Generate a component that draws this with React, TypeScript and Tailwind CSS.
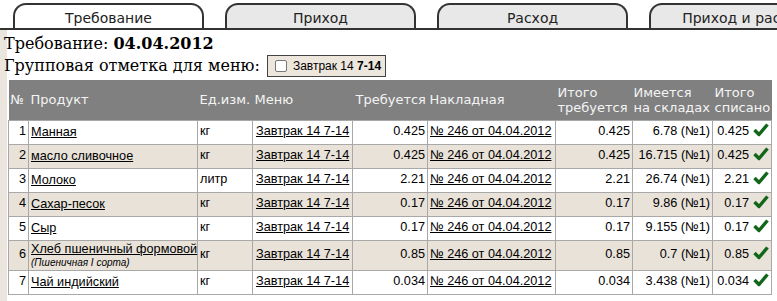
import React from "react";

interface Row {
  n: number;
  product: string;
  note?: string;
  unit: string;
  need: string;
  total: string;
  stock: string;
  done: string;
}

const ROWS: Row[] = [
  { n: 1, product: "Манная", unit: "кг", need: "0.425", total: "0.425", stock: "6.78 (№1)", done: "0.425" },
  { n: 2, product: "масло сливочное", unit: "кг", need: "0.425", total: "0.425", stock: "16.715 (№1)", done: "0.425" },
  { n: 3, product: "Молоко", unit: "литр", need: "2.21", total: "2.21", stock: "26.74 (№1)", done: "2.21" },
  { n: 4, product: "Сахар-песок", unit: "кг", need: "0.17", total: "0.17", stock: "9.86 (№1)", done: "0.17" },
  { n: 5, product: "Сыр", unit: "кг", need: "0.17", total: "0.17", stock: "9.155 (№1)", done: "0.17" },
  { n: 6, product: "Хлеб пшеничный формовой", note: "(Пшеничная I сорта)", unit: "кг", need: "0.85", total: "0.85", stock: "0.7 (№1)", done: "0.85" },
  { n: 7, product: "Чай индийский", unit: "кг", need: "0.034", total: "0.034", stock: "3.438 (№1)", done: "0.034" },
];

const TABS = ["Требование", "Приход", "Расход", "Приход и расход"];

function Check() {
  return (
    <svg width="16" height="14" viewBox="0 0 16 14" className="inline-block ml-[4px] -mt-[4px] align-middle">
      <path d="M1.5 7 L6 11.5 L14.5 1.5" fill="none" stroke="#12661a" strokeWidth="3.4" strokeLinejoin="round" />
    </svg>
  );
}

const td = "border border-[#a8a8a8] px-[2px] whitespace-nowrap";

export default function App() {
  return (
    <div className="w-[777px] h-[301px] overflow-hidden bg-white" style={{ fontFamily: '"Liberation Sans", Arial, sans-serif' }}>
      {/* Tabs */}
      <div className="flex gap-[21px] pl-[13px] pt-[3px] h-[30px] border-b-2 border-[#333] overflow-hidden">
        {TABS.map((t, i) => (
          <div
            key={t}
            className={`shrink-0 w-[191px] h-[28px] rounded-t-[13px] border-2 border-b-0 border-[#333] flex items-center justify-center text-[14px] text-[#222] whitespace-nowrap ${
              i === 0 ? "bg-white h-[29px] -mb-[2px]" : "bg-[#e8e8e8]"
            }`}
            style={{ fontFamily: '"DejaVu Sans", sans-serif' }}
          >
            {t}
          </div>
        ))}
      </div>

      <div className="bg-[linear-gradient(to_right,#ebe6dd_7px,#ffffff_7px)] h-[271px]">
        <div className="pl-[4px] pt-[3px] text-[16px] leading-[22px] text-black" style={{ fontFamily: '"DejaVu Serif", serif' }}>
          <div>
            Требование: <b>04.04.2012</b>
          </div>
          <div className="flex items-center">
            <span>Групповая отметка для меню:</span>
            <label className="ml-[7px] h-[22px] flex items-center gap-[6px] pl-[7px] pr-[4px] bg-[#ece6dc] border border-[#444] text-[12px]" style={{ fontFamily: '"Liberation Sans", Arial, sans-serif' }}>
              <span className="w-[12px] h-[12px] border border-[#777] bg-white rounded-[2px]" />
              <span>
                Завтрак 14 <b>7-14</b>
              </span>
            </label>
          </div>
        </div>

        <table className="ml-[8px] mt-[3px] w-[763px] table-fixed border-collapse text-[12.7px] text-black">
          <colgroup>
            <col className="w-[20px]" />
            <col className="w-[169px]" />
            <col className="w-[55px]" />
            <col className="w-[100px]" />
            <col className="w-[75px]" />
            <col className="w-[128px]" />
            <col className="w-[77px]" />
            <col className="w-[80px]" />
            <col className="w-[59px]" />
          </colgroup>
          <thead>
            <tr className="bg-[#808080] text-[#f4f4f4] h-[40px] text-left text-[13px]" style={{ fontFamily: '"DejaVu Sans", sans-serif' }}>
              <th className="font-normal px-[2px] leading-[15px]">№</th>
              <th className="font-normal px-[2px] leading-[15px]">Продукт</th>
              <th className="font-normal px-[2px] leading-[15px]">Ед.изм.</th>
              <th className="font-normal px-[2px] leading-[15px]">Меню</th>
              <th className="font-normal px-[3px] leading-[15px]">Требуется</th>
              <th className="font-normal px-[2px] leading-[15px]">Накладная</th>
              <th className="font-normal px-[2px] leading-[15px]">Итого требуется</th>
              <th className="font-normal px-[1px] leading-[15px]">Имеется на складах</th>
              <th className="font-normal px-[2px] leading-[15px]">Итого списано</th>
            </tr>
          </thead>
          <tbody>
            {ROWS.map((r, i) => (
              <tr key={r.n} className={`${i % 2 ? "bg-[#e8e2d9]" : "bg-white"} ${r.note ? "h-[30px]" : "h-[24px]"}`}>
                <td className={`${td} text-right`}>{r.n}</td>
                <td className={`${td} leading-[15px]`}>
                  <a className="underline">{r.product}</a>
                  {r.note && <div className="italic text-[10px] leading-[12px]">{r.note}</div>}
                </td>
                <td className={td}>{r.unit}</td>
                <td className={`${td} px-[3px]`}>
                  <a className="underline">Завтрак 14 7-14</a>
                </td>
                <td className={`${td} text-right`}>{r.need}</td>
                <td className={td}>
                  <a className="underline">№ 246 от 04.04.2012</a>
                </td>
                <td className={`${td} text-right`}>{r.total}</td>
                <td className={`${td} text-right`}>{r.stock}</td>
                <td className={`${td} text-right`}>
                  {r.done}
                  <Check />
                </td>
              </tr>
            ))}
          </tbody>
        </table>
      </div>
    </div>
  );
}
